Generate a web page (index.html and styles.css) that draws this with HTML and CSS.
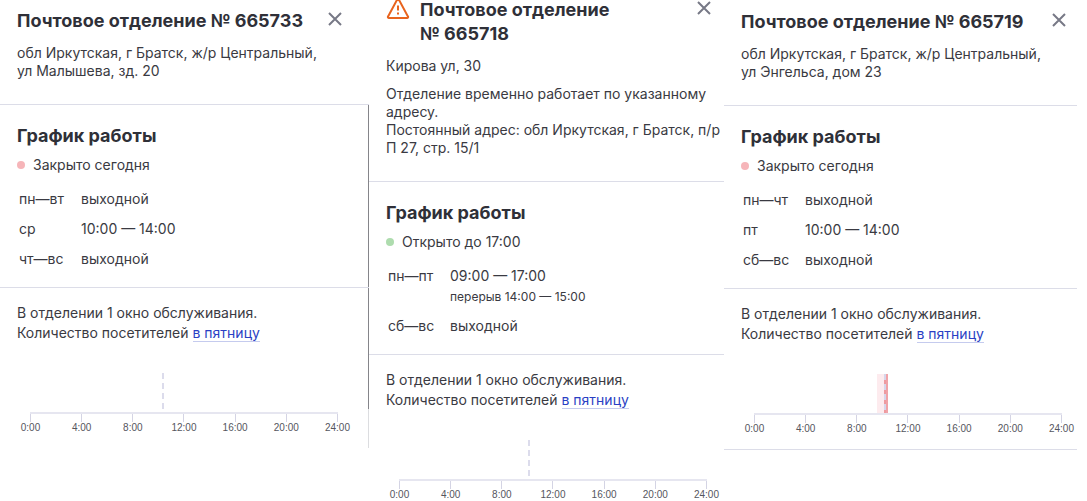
FILE: index.html
```
<!DOCTYPE html>
<html lang="ru">

<head>
    <meta charset="UTF-8">
    <meta name="viewport" content="width=device-width, initial-scale=1.0">
    <title>Почтовые отделения</title>
    <link rel="stylesheet" href="styles.css">
</head>

<body>
    <main class="offices">
        <article class="office office-first">
            <header class="office-header">
                <div class="title-row">
                    <h2>Почтовое отделение №&nbsp;665733</h2>
                    <button class="close" type="button" aria-label="Закрыть">
                        <svg viewBox="0 0 14 14"><path d="M1 1l12 12M13 1L1 13"/></svg>
                    </button>
                </div>
                <p class="address">обл Иркутская, г Братск, ж/р Центральный,<br>ул Малышева, зд. 20</p>
            </header>
            <div class="office-body">
                <section class="schedule">
                    <h3>График работы</h3>
                    <p class="state closed">Закрыто сегодня</p>
                    <table>
                        <tr><th scope="row">пн—вт</th><td>выходной</td></tr>
                        <tr><th scope="row">ср</th><td>10:00 — 14:00</td></tr>
                        <tr><th scope="row">чт—вс</th><td>выходной</td></tr>
                    </table>
                </section>
                <section class="load">
                    <p>В отделении 1 окно обслуживания.<br>Количество посетителей <a href="#">в пятницу</a></p>
                    <div class="chart">
                        <div class="plot">
                            <div class="now" style="margin-left: 43%"></div>
                        </div>
                        <ul class="axis">
                            <li>0:00</li><li>4:00</li><li>8:00</li><li>12:00</li><li>16:00</li><li>20:00</li><li>24:00</li>
                        </ul>
                    </div>
                </section>
            </div>
        </article>

        <article class="office office-moved">
            <header class="office-header">
                <div class="title-row">
                    <svg class="warning" viewBox="0 0 24 24">
                        <path d="M11.200 1.500a1 1 0 0 1 1.600 0l9.100 16.900a1 1 0 0 1-.9 1.600H3a1 1 0 0 1-.9-1.600z"/>
                        <path d="M12 7.500v5M12 14.500v2"/>
                    </svg>
                    <h2>Почтовое отделение №&nbsp;665718</h2>
                    <button class="close" type="button" aria-label="Закрыть">
                        <svg viewBox="0 0 14 14"><path d="M1 1l12 12M13 1L1 13"/></svg>
                    </button>
                </div>
                <p class="address">Кирова ул, 30</p>
                <p class="notice">Отделение временно работает по указанному<br>адресу.<br>Постоянный адрес: обл Иркутская, г Братск, п/р<br>П 27, стр. 15/1</p>
            </header>
            <div class="office-body">
                <section class="schedule">
                    <h3>График работы</h3>
                    <p class="state open">Открыто до 17:00</p>
                    <table>
                        <tr><th scope="row">пн—пт</th><td>09:00 — 17:00<span class="break">перерыв 14:00 — 15:00</span></td></tr>
                        <tr><th scope="row">сб—вс</th><td>выходной</td></tr>
                    </table>
                </section>
                <section class="load">
                    <p>В отделении 1 окно обслуживания.<br>Количество посетителей <a href="#">в пятницу</a></p>
                    <div class="chart">
                        <div class="plot">
                            <div class="now" style="margin-left: 42%"></div>
                        </div>
                        <ul class="axis">
                            <li>0:00</li><li>4:00</li><li>8:00</li><li>12:00</li><li>16:00</li><li>20:00</li><li>24:00</li>
                        </ul>
                    </div>
                </section>
            </div>
        </article>

        <article class="office office-last">
            <header class="office-header">
                <div class="title-row">
                    <h2>Почтовое отделение №&nbsp;665719</h2>
                    <button class="close" type="button" aria-label="Закрыть">
                        <svg viewBox="0 0 14 14"><path d="M1 1l12 12M13 1L1 13"/></svg>
                    </button>
                </div>
                <p class="address">обл Иркутская, г Братск, ж/р Центральный,<br>ул Энгельса, дом 23</p>
            </header>
            <div class="office-body">
                <section class="schedule">
                    <h3>График работы</h3>
                    <p class="state closed">Закрыто сегодня</p>
                    <table>
                        <tr><th scope="row">пн—чт</th><td>выходной</td></tr>
                        <tr><th scope="row">пт</th><td>10:00 — 14:00</td></tr>
                        <tr><th scope="row">сб—вс</th><td>выходной</td></tr>
                    </table>
                </section>
                <section class="load">
                    <p>В отделении 1 окно обслуживания.<br>Количество посетителей <a href="#">в пятницу</a></p>
                    <div class="chart">
                        <div class="plot">
                            <div class="bar" style="margin-left: 40%"><div class="now"></div></div>
                        </div>
                        <ul class="axis">
                            <li>0:00</li><li>4:00</li><li>8:00</li><li>12:00</li><li>16:00</li><li>20:00</li><li>24:00</li>
                        </ul>
                    </div>
                </section>
            </div>
        </article>
    </main>
</body>

</html>
```
FILE: styles.css
```
* {
    box-sizing: border-box;
}

body {
    margin: 0;
    background: #fff;
    color: #3a3a42;
    font-family: Inter, "Noto Sans", sans-serif;
    font-size: 14px;
    line-height: 18px;
}

h2,
h3,
p,
ul {
    margin: 0;
    padding: 0;
}

h2,
h3 {
    color: #2f3038;
    font-size: 18px;
    line-height: 24px;
    font-weight: 700;
}

.offices {
    display: grid;
    grid-template-columns: 369fr 355fr 353fr;
    align-items: start;
    height: 100vh;
    padding-right: 10px;
    overflow: hidden;
}

.office {
    min-width: 0;
    white-space: nowrap;
}

.office-moved {
    margin-top: -11px;
}

.office-last {
    margin-top: 1px;
    border-bottom: 1px solid #dcdde8;
}

.office-header {
    padding: 9px 0 24px 17px;
    border-bottom: 1px solid #dcdde8;
}

.title-row {
    display: flex;
    align-items: flex-start;
    max-width: 325px;
    margin-bottom: 11px;
}

.title-row h2 {
    flex: 1;
}

.office-moved h2 {
    white-space: normal;
}

.warning {
    flex: none;
    width: 24px;
    height: 24px;
    margin-right: 10px;
    fill: none;
    stroke: #e8641e;
    stroke-width: 2;
}

.close {
    flex: none;
    width: 14px;
    height: 14px;
    margin-top: 3px;
    padding: 0;
    border: 0;
    background: none;
}

.close svg {
    display: block;
    fill: none;
    stroke: #777986;
    stroke-width: 2;
}

.notice {
    margin-top: 10px;
}

/* scroll track with its thumb on the right edge */
.office-first .office-body {
    background:
        linear-gradient(#85858a, #85858a) right top / 1px 304px no-repeat,
        linear-gradient(#dcdde0, #dcdde0) right top / 1px 100% no-repeat;
}

.schedule {
    padding: 19px 0 13px 17px;
    border-bottom: 1px solid #dcdde8;
}

.state {
    display: flex;
    align-items: center;
    gap: 8px;
    margin: 8px 0 10px;
}

.state::before {
    content: "";
    width: 8px;
    height: 8px;
    border-radius: 50%;
}

.closed::before {
    background: #f6b5b9;
}

.open::before {
    background: #aedcae;
}

table {
    border-collapse: collapse;
}

th,
td {
    padding: 6px 0 6px 2px;
    font-weight: 400;
    text-align: left;
    vertical-align: top;
}

th {
    width: 62px;
}

.break {
    display: block;
    padding-top: 4px;
    font-size: 12px;
    line-height: 16px;
}

.load {
    padding: 15px 0 14px 17px;
    line-height: 20px;
}

.load a {
    border-bottom: 1px solid #c5cbee;
    color: #2a3fc4;
    text-decoration: none;
}

.chart {
    max-width: 308px;
    margin: 30px 0 0 13px;
}

.plot {
    height: 41px;
    border-bottom: 2px solid #e6e6f0;
}

.now {
    width: 2px;
    height: 36px;
    background: repeating-linear-gradient(#dcdcec 0 6px, transparent 6px 10px);
}

.bar {
    display: flex;
    justify-content: flex-end;
    width: 11px;
    height: 39px;
    border-right: 2px solid #f0a3a8;
    background: #fdebee;
}

.bar .now {
    height: 39px;
    background: repeating-linear-gradient(#d6d6ea 0 6px, #ee9aa0 6px 10px);
}

.axis {
    display: flex;
    justify-content: space-between;
    color: #55565e;
    font: 10px/12px "Liberation Sans", Arial, sans-serif;
    list-style: none;
}

.axis li {
    display: flex;
    flex-direction: column;
    align-items: center;
    width: 1px;
}

.axis li::before {
    content: "";
    width: 1px;
    height: 8px;
    background: #d4d4e4;
}
```
